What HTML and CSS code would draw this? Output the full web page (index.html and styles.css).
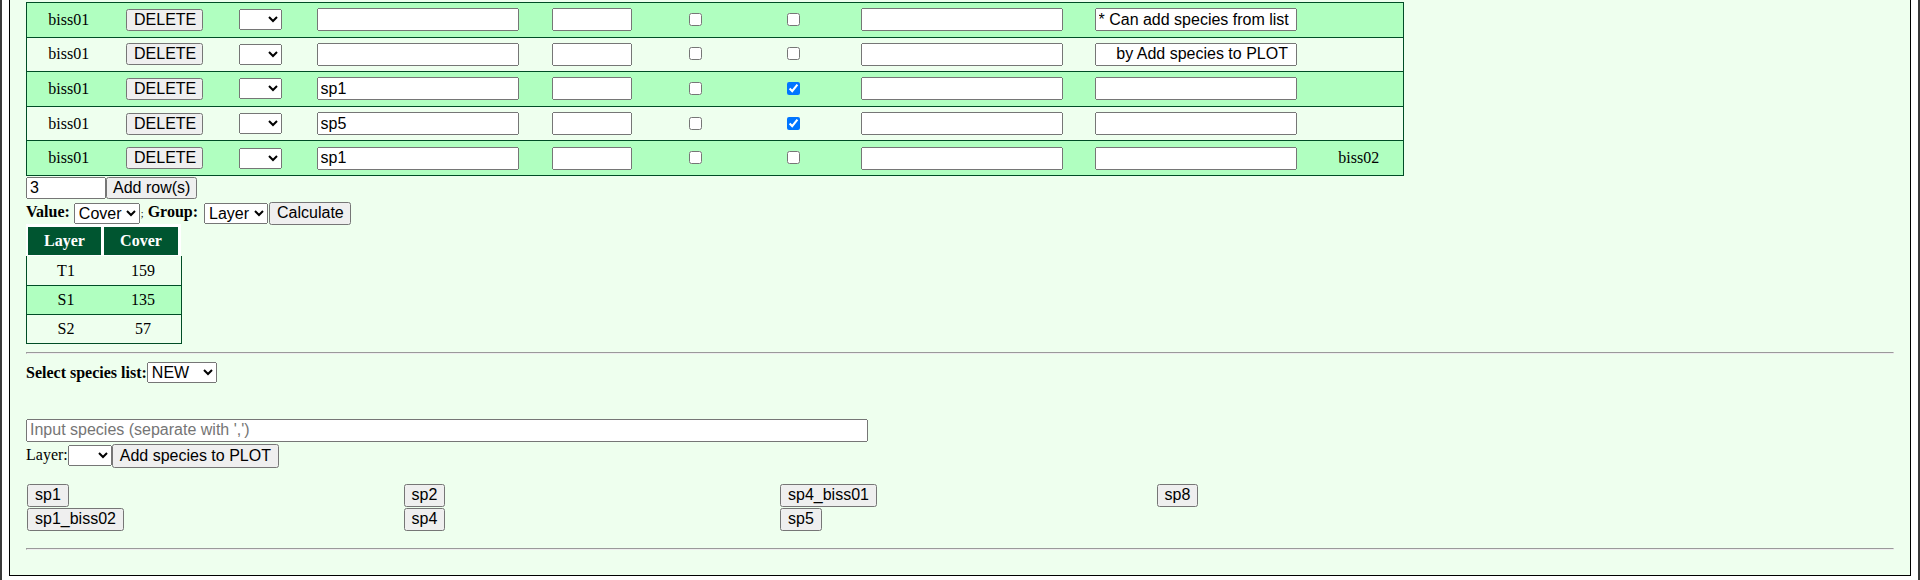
FILE: index.html
```html
<!DOCTYPE html>
<html>
<head>
<meta charset="utf-8">
<title>Plot</title>
<link rel="stylesheet" href="styles.css">
</head>
<body>
<div class="frame">
  <div class="panel">
    <table class="plot">
      <colgroup>
        <col class="c1"><col class="c2"><col class="c3"><col class="c4"><col class="c5">
        <col class="c6"><col class="c7"><col class="c8"><col class="c9"><col class="c10">
      </colgroup>
      <tr class="g">
        <td>biss01</td>
        <td><button class="del">DELETE</button></td>
        <td><select class="lay"><option></option></select></td>
        <td><input class="sp" type="text" value=""></td>
        <td><input class="num" type="text" value=""></td>
        <td><input type="checkbox"></td>
        <td><input type="checkbox"></td>
        <td><input class="sp" type="text" value=""></td>
        <td><input class="note" type="text" value="* Can add species from list"></td>
        <td></td>
      </tr>
      <tr>
        <td>biss01</td>
        <td><button class="del">DELETE</button></td>
        <td><select class="lay"><option></option></select></td>
        <td><input class="sp" type="text" value=""></td>
        <td><input class="num" type="text" value=""></td>
        <td><input type="checkbox"></td>
        <td><input type="checkbox"></td>
        <td><input class="sp" type="text" value=""></td>
        <td><input class="note" type="text" value="    by Add species to PLOT"></td>
        <td></td>
      </tr>
      <tr class="g">
        <td>biss01</td>
        <td><button class="del">DELETE</button></td>
        <td><select class="lay"><option></option></select></td>
        <td><input class="sp" type="text" value="sp1"></td>
        <td><input class="num" type="text" value=""></td>
        <td><input type="checkbox"></td>
        <td><input type="checkbox" checked></td>
        <td><input class="sp" type="text" value=""></td>
        <td><input class="note" type="text" value=""></td>
        <td></td>
      </tr>
      <tr>
        <td>biss01</td>
        <td><button class="del">DELETE</button></td>
        <td><select class="lay"><option></option></select></td>
        <td><input class="sp" type="text" value="sp5"></td>
        <td><input class="num" type="text" value=""></td>
        <td><input type="checkbox"></td>
        <td><input type="checkbox" checked></td>
        <td><input class="sp" type="text" value=""></td>
        <td><input class="note" type="text" value=""></td>
        <td></td>
      </tr>
      <tr class="g">
        <td>biss01</td>
        <td><button class="del">DELETE</button></td>
        <td><select class="lay"><option></option></select></td>
        <td><input class="sp" type="text" value="sp1"></td>
        <td><input class="num" type="text" value=""></td>
        <td><input type="checkbox"></td>
        <td><input type="checkbox"></td>
        <td><input class="sp" type="text" value=""></td>
        <td><input class="note" type="text" value=""></td>
        <td>biss02</td>
      </tr>
    </table>

    <div class="addrow">
      <input class="rows" type="text" value="3"><button class="addbtn">Add row(s)</button>
    </div>

    <div class="calc">
      <b>Value:</b> <select class="val"><option>Cover</option></select><span class="semi">;</span> <b>Group:</b> <select class="grp"><option>Layer</option></select><button class="calcbtn">Calculate</button>
    </div>

    <div class="res">
      <div class="res-head"><div class="rh">Layer</div><div class="rh">Cover</div></div>
      <table class="res-body">
        <tr class="first"><td class="r1">T1</td><td class="r2">159</td></tr>
        <tr class="g"><td class="r1">S1</td><td class="r2">135</td></tr>
        <tr><td class="r1">S2</td><td class="r2">57</td></tr>
      </table>
    </div>

    <hr>

    <div class="listsel"><b>Select species list:</b><select class="newsel"><option>NEW</option></select></div>

    <input class="spin" type="text" placeholder="Input species (separate with ',')">
    <div class="layrow">Layer:<select class="lay2"><option></option></select><button class="addsp">Add species to PLOT</button></div>

    <div class="spgrid">
      <div class="spcell"><button class="spb">sp1</button></div>
      <div class="spcell"><button class="spb">sp2</button></div>
      <div class="spcell"><button class="spb">sp4_biss01</button></div>
      <div class="spcell"><button class="spb">sp8</button></div>
      <div class="spcell"><button class="spb">sp1_biss02</button></div>
      <div class="spcell"><button class="spb">sp4</button></div>
      <div class="spcell"><button class="spb">sp5</button></div>
      <div class="spcell"></div>
    </div>

    <hr>
  </div>
</div>
</body>
</html>
```

FILE: styles.css
```css
html, body {
  margin: 0;
  padding: 0;
  background: #ffffff;
  overflow: hidden;
}
body {
  font-family: "Liberation Serif", "Times New Roman", serif;
  font-size: 16px;
  color: #000;
}
button, input, select {
  font-family: "Liberation Sans", Arial, sans-serif;
  font-size: 16px;
  margin: 0;
  box-sizing: border-box;
}
button {
  padding: 0 6px;
  height: 22px;
  white-space: nowrap;
}
input[type="text"] {
  height: 23px;
  padding: 0 2px;
}
select {
  height: 21px;
  padding: 0;
}
input[type="checkbox"] {
  margin: 3px 3px 3px 4px;
}

.frame {
  border-left: 2px solid #3a3a3a;
  border-right: 2px solid #3a3a3a;
  padding: 0 7px;
  height: 580px;
  box-sizing: border-box;
  background: #fff;
}
.panel {
  background: #eeffee;
  border: 1px solid #000;
  border-top: none;
  padding: 2px 16px 17px 16px;
}

/* main plot table */
.plot {
  border-collapse: collapse;
  table-layout: fixed;
  width: 1377px;
  border: 1px solid #004d26;
  border-top: none;
}
.plot td {
  border-top: 1px solid #004d26;
  height: 33.6px;
  padding: 0;
  text-align: center;
  vertical-align: middle;
}
.plot tr.g { background: #b0ffc0; }
.c1 { width: 84px; }
.c2 { width: 108px; }
.c3 { width: 84px; }
.c4 { width: 230px; }
.c5 { width: 118px; }
.c6 { width: 88px; }
.c7 { width: 108px; }
.c8 { width: 230px; }
.c9 { width: 238px; }
.c10 { width: 89px; }
.del { width: 77px; vertical-align: middle; }
.lay { width: 43px; vertical-align: middle; }
.sp { width: 202px; vertical-align: middle; }
.num { width: 80px; vertical-align: middle; }
.note { width: 202px; vertical-align: middle; white-space: pre; }

/* add rows */
.addrow {
  display: flex;
  margin-top: 1px;
  height: 22px;
}
.rows { width: 80px; height: 22px !important; }
.addbtn { padding: 0 5px; }

/* calc row */
.calc {
  height: 25px;
  line-height: 25px;
}
.calc select, .calc button { vertical-align: middle; }
.semi { font-size: 10px; margin-left: 1px; }
.val { width: 66px; }
.grp { width: 64px; margin-left: 2px; }
.calcbtn { width: 82px; height: 23px; margin-left: 1px; }

/* result table */
.res-head {
  display: grid;
  grid-template-columns: 73px 74px;
  column-gap: 3px;
  padding: 3px 3px 1px 2px;
  background: #fff;
  width: fit-content;
}
.rh {
  background: #005530;
  color: #fff;
  font-weight: bold;
  height: 28px;
  line-height: 28px;
  text-align: center;
}
.res-body {
  border-collapse: collapse;
  width: 154px;
  table-layout: fixed;
  border: 1px solid #004d26;
  border-top: none;
}
.res-body td {
  border-bottom: 1px solid #004d26;
  height: 27.6px;
  padding: 0;
  text-align: center;
}
.res-body tr.first td { height: 29.4px; }
.res-body .r1 { width: 78px; }
.res-body .r2 { width: 76px; }
.res-body tr.g { background: #b0ffc0; }

hr {
  margin: 8px 0;
}

/* species list */
.listsel {
  height: 21px;
  line-height: 21px;
}
.newsel { width: 70px; vertical-align: top; }
.spin {
  display: block;
  width: 842px;
  margin-top: 36px;
}
.layrow {
  margin-top: 1px;
  height: 24px;
  line-height: 24px;
}
.layrow select, .layrow button { vertical-align: middle; }
.lay2 { width: 44px; }
.addsp { height: 24px; }

.spgrid {
  display: grid;
  grid-template-columns: repeat(4, 376.5px);
  grid-auto-rows: 24px;
  margin-top: 17px;
  margin-bottom: 16px;
  padding-left: 1px;
}
.spb { height: 23px; }
```
